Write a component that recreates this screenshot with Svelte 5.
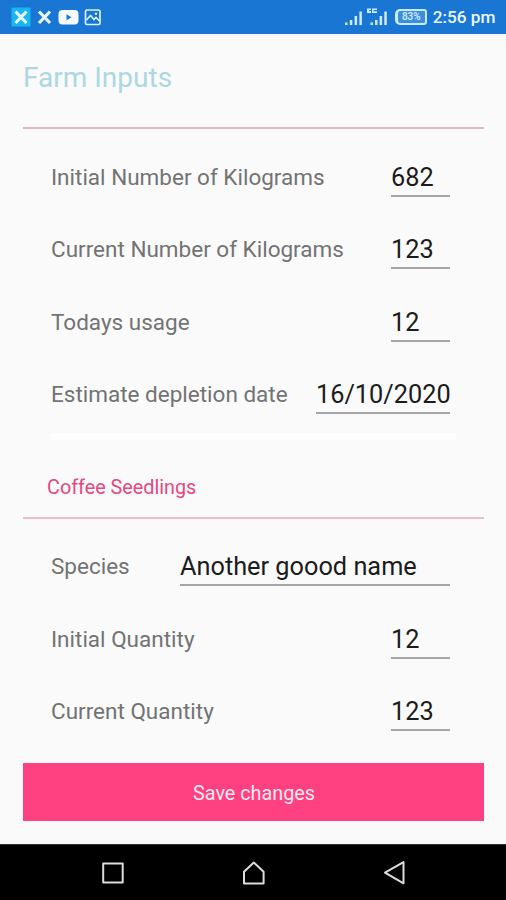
<script>
  let inputs = $state([
    { label: 'Initial Number of Kilograms', value: '682', width: 59 },
    { label: 'Current Number of Kilograms', value: '123', width: 59 },
    { label: 'Todays usage', value: '12', width: 59 },
    { label: 'Estimate depletion date', value: '16/10/2020', width: 134 },
  ]);
  let seedlings = $state([
    { label: 'Species', value: 'Another goood name', width: 270 },
    { label: 'Initial Quantity', value: '12', width: 59 },
    { label: 'Current Quantity', value: '123', width: 59 },
  ]);
</script>

{#snippet row(item)}
  <div class="row">
    <span class="label">{item.label}</span>
    <span class="value" style="width: {item.width}px">{item.value}</span>
  </div>
{/snippet}

<div class="screen">
  <header class="status">
    <svg class="left" width="94" height="22" viewBox="0 0 94 22">
      <rect x="0.500" y="1.500" width="19" height="19" fill="#16b5f3" />
      <path d="M4.500 5.500L15.500 17M15.500 5.500L4.500 17" stroke="#e6faff" stroke-width="3.200" />
      <path d="M28 5.500L39 17M39 5.500L28 17" stroke="#e9f7ff" stroke-width="3.200" />
      <rect x="47.500" y="4" width="20" height="14.500" rx="4" fill="#f5fbff" />
      <path d="M55.500 8.200V14.300L60.500 11.200Z" fill="#1976d2" />
      <rect x="74.500" y="4" width="14.500" height="14.500" rx="1.500" fill="none" stroke="#d9f2ff" stroke-width="1.700" />
      <path d="M75.500 14L79.500 9.500L83 13.500L85 11.500L88.500 15" fill="none" stroke="#d9f2ff" stroke-width="1.600" />
      <circle cx="85" cy="7.800" r="1.200" fill="#d9f2ff" />
    </svg>
    <div class="right">
      <svg width="46" height="24" viewBox="0 0 46 24" fill="#cdeafc">
        <rect x="1" y="17.500" width="2.500" height="2.500" />
        <rect x="5.800" y="15" width="2.500" height="5" />
        <rect x="10.600" y="11" width="2.500" height="9" />
        <rect x="15.400" y="6.500" width="2.500" height="13.500" />
        <path d="M23 3.500h4v1.500h-2v1h2v2h-4zM28 3.500h5v1.500h-3.500v1.200h3.500v1.800h-5z" />
        <rect x="26.500" y="17.500" width="2.500" height="2.500" />
        <rect x="31" y="15" width="2.500" height="5" />
        <rect x="35.600" y="11" width="2.500" height="9" />
        <rect x="40.300" y="6.500" width="2.500" height="13.500" />
      </svg>
      <div class="battery">83%</div>
      <span class="time">2:56 pm</span>
    </div>
  </header>

  <main>
    <h1>Farm Inputs</h1>
    <section>
      {#each inputs as item}
        {@render row(item)}
      {/each}
    </section>
    <div class="strip"></div>
    <h2>Coffee Seedlings</h2>
    <section class="seedlings">
      {#each seedlings as item}
        {@render row(item)}
      {/each}
    </section>
    <button>Save changes</button>
  </main>

  <nav>
    <svg width="26" height="28" viewBox="0 0 26 28"><rect x="3.200" y="4.500" width="19.500" height="19" /></svg>
    <svg width="26" height="28" viewBox="0 0 26 28"><path d="M3 12.800L12.800 3.500L22.600 12.800V24.500H3Z" /></svg>
    <svg width="26" height="28" viewBox="0 0 26 28"><path d="M22.500 3.100V24.300L4 13.700Z" /></svg>
  </nav>
</div>

<style>
  .screen {
    width: 506px;
    height: 900px;
    display: flex;
    flex-direction: column;
    overflow: hidden;
    background: #fafafa;
    font-family: Roboto, "Liberation Sans", sans-serif;
  }
  .status {
    box-sizing: border-box;
    height: 34px;
    flex: none;
    display: flex;
    align-items: center;
    justify-content: space-between;
    padding: 0 10.500px 0 11px;
    background: #1976d2;
  }
  .right {
    display: flex;
    align-items: center;
  }
  .battery {
    box-sizing: border-box;
    width: 32px;
    height: 16px;
    margin: 0 6px 0 5px;
    border: 2px solid #c8eafd;
    border-left-width: 3px;
    border-radius: 5px 3px 3px 5px;
    background: #3d8edb;
    color: #d5effd;
    font-size: 10px;
    line-height: 12px;
    font-weight: 500;
    text-align: center;
  }
  .time {
    font-size: 17.200px;
    line-height: 22px;
    font-weight: 500;
    color: #e8f6ff;
    white-space: nowrap;
  }
  main {
    flex: 1;
    display: flex;
    flex-direction: column;
    padding: 0 22px 0 23px;
  }
  h1, h2 {
    margin: 0;
    font-weight: 400;
    white-space: nowrap;
  }
  h1 {
    box-sizing: border-box;
    height: 95px;
    padding-top: 27px;
    border-bottom: 2px solid #e2b7c5;
    color: #acd8e3;
    font-size: 28px;
    line-height: 33px;
  }
  section {
    padding: 12px 34px 0 28px;
  }
  .seedlings {
    padding-top: 11px;
  }
  .row {
    height: 72.300px;
    display: flex;
    align-items: center;
    justify-content: space-between;
    white-space: nowrap;
  }
  .label {
    color: #737373;
    font-size: 22.500px;
    line-height: 28px;
  }
  .value {
    box-sizing: border-box;
    height: 40px;
    padding-top: 6px;
    border-bottom: 2px solid #a6a6a6;
    color: #1c1c1c;
    font-size: 25.300px;
    line-height: 30px;
  }
  .strip {
    height: 7px;
    margin: 3px 28px 0;
    background: #fefefe;
  }
  h2 {
    box-sizing: border-box;
    height: 79px;
    padding: 36px 0 0 24px;
    border-bottom: 2px solid #e6c1cd;
    color: #e6487f;
    font-size: 19.800px;
    line-height: 24px;
  }
  button {
    height: 58px;
    margin: 16px 0 0;
    padding: 4px 0 0 1px;
    border: 0;
    background: #ff4081;
    color: #ffe8f0;
    font: 400 19.800px/24px Roboto, sans-serif;
  }
  nav {
    box-sizing: border-box;
    height: 56px;
    flex: none;
    display: flex;
    align-items: center;
    justify-content: space-between;
    padding: 0 99px 0 100px;
    background: #000;
    border-top: 1px solid #333;
  }
  nav svg {
    fill: none;
    stroke: #dcdcdc;
    stroke-width: 2;
    stroke-linejoin: round;
  }
</style>
